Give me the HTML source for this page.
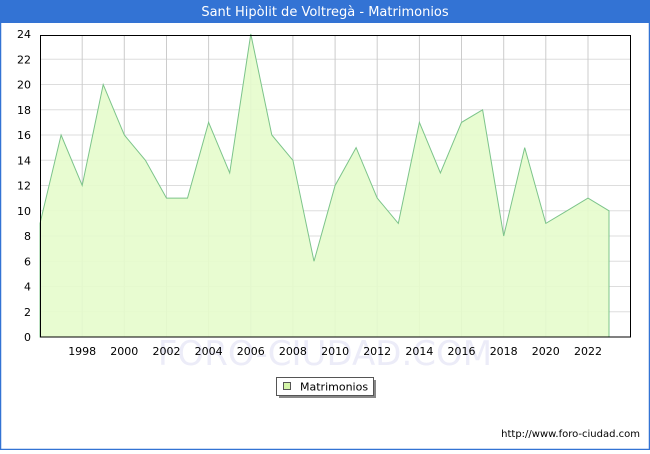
<!DOCTYPE html><html><head><style>body{margin:0;width:650px;height:450px;overflow:hidden;background:#fff;font-family:"DejaVu Sans","Liberation Sans",sans-serif}</style></head><body>
<svg width="650" height="450" xmlns="http://www.w3.org/2000/svg" font-family="DejaVu Sans, Liberation Sans, sans-serif">
<rect x="0" y="0" width="650" height="450" fill="#fff"/>
<rect x="0.5" y="0.5" width="649" height="449" fill="none" stroke="#3373d4" stroke-width="1.5"/>
<rect x="0" y="0" width="650" height="23" fill="#3373d4"/>
<text x="325" y="16" fill="#fff" font-size="13" text-anchor="middle">Sant Hipòlit de Voltregà - Matrimonios</text>
<g stroke="#ddd" stroke-width="1">
<line x1="40" x2="630" y1="311.8" y2="311.8"/><line x1="40" x2="630" y1="286.5" y2="286.5"/><line x1="40" x2="630" y1="261.3" y2="261.3"/><line x1="40" x2="630" y1="236" y2="236"/><line x1="40" x2="630" y1="210.8" y2="210.8"/><line x1="40" x2="630" y1="185.5" y2="185.5"/><line x1="40" x2="630" y1="160.3" y2="160.3"/><line x1="40" x2="630" y1="135" y2="135"/><line x1="40" x2="630" y1="109.8" y2="109.8"/><line x1="40" x2="630" y1="84.5" y2="84.5"/><line x1="40" x2="630" y1="59.3" y2="59.3"/>
</g>
<g stroke="#ccc" stroke-width="1">
<line x1="82.2" x2="82.2" y1="35" y2="337"/><line x1="124.3" x2="124.3" y1="35" y2="337"/><line x1="166.5" x2="166.5" y1="35" y2="337"/><line x1="208.6" x2="208.6" y1="35" y2="337"/><line x1="250.8" x2="250.8" y1="35" y2="337"/><line x1="292.9" x2="292.9" y1="35" y2="337"/><line x1="335.1" x2="335.1" y1="35" y2="337"/><line x1="377.2" x2="377.2" y1="35" y2="337"/><line x1="419.4" x2="419.4" y1="35" y2="337"/><line x1="461.5" x2="461.5" y1="35" y2="337"/><line x1="503.7" x2="503.7" y1="35" y2="337"/><line x1="545.8" x2="545.8" y1="35" y2="337"/><line x1="588" x2="588" y1="35" y2="337"/>
</g>
<text x="325" y="365" font-size="34" fill="#ececf8" text-anchor="middle">FORO-CIUDAD.COM</text>
<polygon fill="#e6fccc" fill-opacity="0.9" stroke="#7cc48a" stroke-width="1" points="40,337 40,223.4 61.1,135 82.2,185.5 103.2,84.5 124.3,135 145.4,160.3 166.5,198.1 187.5,198.1 208.6,122.4 229.7,172.9 250.8,34 271.8,135 292.9,160.3 314,261.3 335.1,185.5 356.1,147.6 377.2,198.1 398.3,223.4 419.4,122.4 440.4,172.9 461.5,122.4 482.6,109.8 503.7,236 524.7,147.6 545.8,223.4 566.9,210.8 588,198.1 609,210.8 609,337"/>
<rect x="40.5" y="35.5" width="590" height="301.5" fill="none" stroke="#000" stroke-width="1"/>
<g font-size="11" fill="#000" text-anchor="end">
<text x="31" y="341">0</text><text x="31" y="316">2</text><text x="31" y="290.5">4</text><text x="31" y="265.3">6</text><text x="31" y="240">8</text><text x="31" y="214.8">10</text><text x="31" y="189.5">12</text><text x="31" y="164.3">14</text><text x="31" y="139">16</text><text x="31" y="113.8">18</text><text x="31" y="88.5">20</text><text x="31" y="63.3">22</text><text x="31" y="38">24</text>
</g>
<g font-size="11" fill="#000" text-anchor="middle">
<text x="82.2" y="355">1998</text><text x="124.3" y="355">2000</text><text x="166.5" y="355">2002</text><text x="208.6" y="355">2004</text><text x="250.8" y="355">2006</text><text x="292.9" y="355">2008</text><text x="335.1" y="355">2010</text><text x="377.2" y="355">2012</text><text x="419.4" y="355">2014</text><text x="461.5" y="355">2016</text><text x="503.7" y="355">2018</text><text x="545.8" y="355">2020</text><text x="588" y="355">2022</text>
</g>
<rect x="279" y="380" width="97" height="18" fill="#888"/>
<rect x="276.5" y="377.5" width="97" height="18" fill="#fff" stroke="#555"/>
<rect x="283.5" y="382.5" width="7" height="7" fill="#d4f5a8" stroke="#555"/>
<text x="300" y="390.5" font-size="11">Matrimonios</text>
<text x="640" y="437" font-size="10" text-anchor="end">http://www.foro-ciudad.com</text>
</svg></body></html>
